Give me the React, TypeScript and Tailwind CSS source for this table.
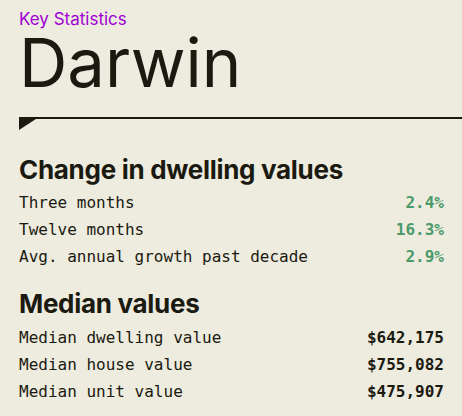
const changeRows = [
  { label: "Three months", value: "2.4%" },
  { label: "Twelve months", value: "16.3%" },
  { label: "Avg. annual growth past decade", value: "2.9%" },
];

const medianRows = [
  { label: "Median dwelling value", value: "$642,175" },
  { label: "Median house value", value: "$755,082" },
  { label: "Median unit value", value: "$475,907" },
];

function StatRow({ label, value, green }: { label: string; value: string; green?: boolean }) {
  return (
    <div className="flex items-center justify-between h-[27px] pr-[18px] font-['DejaVu_Sans_Mono',monospace] text-[16px]">
      <span className="text-[#1b1a10]">{label}</span>
      <span className={green ? "font-bold text-[#4c9a6b]" : "font-bold text-[#1b1a10]"}>{value}</span>
    </div>
  );
}

export default function App() {
  return (
    <div className="w-[462px] h-[416px] bg-[#eeebdf] pl-[19px] pt-[9px] font-['Inter',sans-serif] text-[#1b1a10] overflow-hidden">
      <div className="text-[17px] leading-[20px] text-[#a000d4]">Key Statistics</div>
      <h1 className="text-[67px] leading-[68px] font-normal">Darwin</h1>

      {/* divider with the little flag */}
      <div className="relative mt-[20px] h-[2px] bg-[#1b1a10]">
        <svg className="absolute left-0 top-0" width="20" height="13" viewBox="0 0 20 13">
          <polygon points="0,0 20,0 0,13" fill="#1b1a10" />
        </svg>
      </div>

      <h2 className="mt-[36px] text-[26px] leading-[30px] font-bold tracking-[-0.3px]">Change in dwelling values</h2>
      <div className="mt-[4px]">
        {changeRows.map((r) => (
          <StatRow key={r.label} label={r.label} value={r.value} green />
        ))}
      </div>

      <h2 className="mt-[19px] text-[26px] leading-[30px] font-bold tracking-[-0.3px]">Median values</h2>
      <div className="mt-[5px]">
        {medianRows.map((r) => (
          <StatRow key={r.label} label={r.label} value={r.value} />
        ))}
      </div>
    </div>
  );
}
